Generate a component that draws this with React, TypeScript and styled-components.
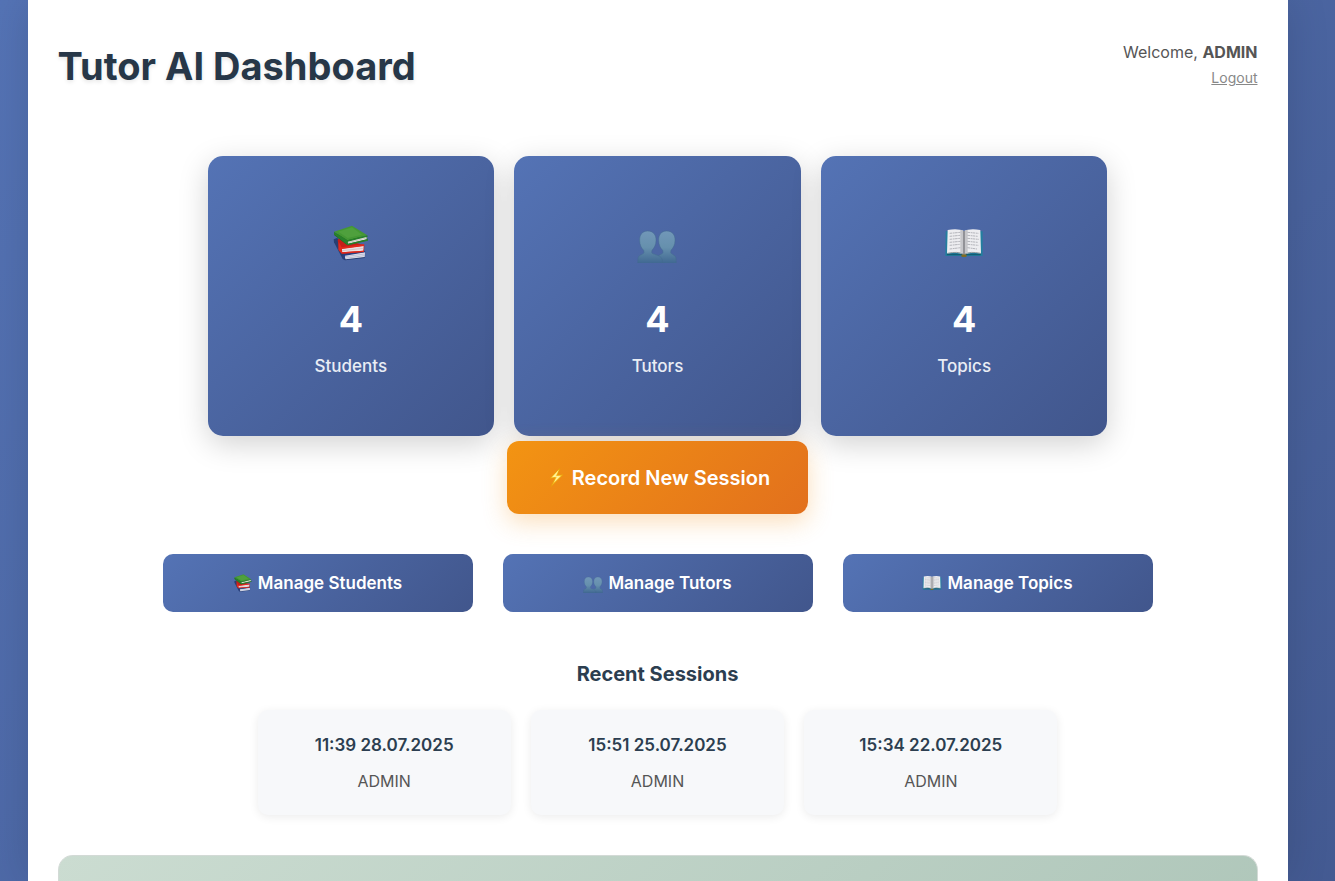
import React from "react";
import styled, { createGlobalStyle } from "styled-components";

const GlobalStyle = createGlobalStyle`
  * { box-sizing: border-box; }
  body {
    margin: 0;
    font-family: Inter, "Liberation Sans", sans-serif;
    color: #2c3e50;
    background: #4a649f;
  }
  h1, h2, p { margin: 0; }
`;

const BLUE = "linear-gradient(135deg, #5473b5 0%, #41568c 100%)";

const Page = styled.div`
  display: flex;
  justify-content: center;
  min-height: 100vh;
  padding-right: 20px;
  background: linear-gradient(135deg, #5473b5 0%, #41568c 100%) 0 0 / 100% 1240px;
`;

const Container = styled.main`
  display: flex;
  flex-direction: column;
  align-items: center;
  width: 100%;
  max-width: 1260px;
  padding: 40px 30px 0;
  background: #fff;
  box-shadow: 0 0 40px rgba(0, 0, 0, 0.13);
`;

const Header = styled.header`
  display: flex;
  justify-content: space-between;
  align-items: flex-start;
  width: 100%;
  margin-bottom: 64px;
`;

const Title = styled.h1`
  font-size: 38px;
  line-height: 52px;
  font-weight: 700;
  color: #273748;
  text-shadow: 0 2px 4px rgba(0, 0, 0, 0.1);
`;

const UserBox = styled.div`
  display: flex;
  flex-direction: column;
  align-items: flex-end;
  gap: 4px;
  font-size: 16px;
  line-height: 24px;
  color: #555;
`;

const LogoutLink = styled.a`
  font-size: 14px;
  line-height: 20px;
  color: #888;
  text-decoration: underline;
`;

const Stats = styled.section`
  display: grid;
  grid-template-columns: repeat(3, 1fr);
  gap: 20px;
  width: 100%;
  max-width: 900px;
`;

const StatCard = styled.article`
  display: flex;
  flex-direction: column;
  align-items: center;
  padding: 67px 20px 59px;
  border-radius: 15px;
  background: ${BLUE};
  color: #fff;
  box-shadow: 0 8px 30px rgba(0, 0, 0, 0.18);
`;

const StatValue = styled.p`
  margin: 36px 0 16px;
  font-size: 36px;
  line-height: 40px;
  font-weight: 700;
`;

const StatLabel = styled.p`
  font-size: 17px;
  line-height: 22px;
  font-weight: 500;
  color: #e9edf5;
`;

const RecordButton = styled.button`
  display: flex;
  align-items: center;
  justify-content: center;
  gap: 5px;
  height: 73px;
  margin: 5px 0 40px;
  padding: 0 38px;
  border: 0;
  border-radius: 12px;
  background: linear-gradient(135deg, #f39412 0%, #e2701d 100%);
  box-shadow: 0 8px 25px rgba(243, 148, 32, 0.3);
  color: #fff;
  font: 600 20px/28px Inter, "Liberation Sans", sans-serif;
  cursor: pointer;
`;

const Actions = styled.nav`
  display: grid;
  grid-template-columns: repeat(3, 1fr);
  gap: 30px;
  width: 100%;
  max-width: 990px;
  margin-bottom: 48px;
`;

const ActionLink = styled.a`
  display: flex;
  align-items: center;
  justify-content: center;
  gap: 5px;
  height: 58px;
  border-radius: 10px;
  background: ${BLUE};
  color: #fff;
  font-size: 17px;
  line-height: 24px;
  font-weight: 600;
  text-decoration: none;
`;

const SectionTitle = styled.h2`
  margin-bottom: 22px;
  font-size: 20px;
  line-height: 28px;
  font-weight: 700;
  color: #2c3e50;
`;

const Sessions = styled.section`
  display: grid;
  grid-template-columns: repeat(3, 1fr);
  gap: 20px;
  width: 100%;
  max-width: 800px;
  margin-bottom: 40px;
`;

const SessionCard = styled.article`
  display: flex;
  flex-direction: column;
  align-items: center;
  gap: 12px;
  padding: 23px 20px 22px;
  border-radius: 10px;
  background: #f7f8fa;
  box-shadow: 0 2px 10px rgba(0, 0, 0, 0.08);
  line-height: 24px;
`;

const SessionDate = styled.p`
  font-size: 17px;
  font-weight: 600;
`;

const SessionTutor = styled.p`
  font-size: 16px;
  color: #555;
`;

const Panel = styled.section`
  flex: 1;
  width: 100%;
  min-height: 26px;
  border: 1px solid #d3dad6;
  border-bottom: 0;
  border-radius: 15px 15px 0 0;
  background: linear-gradient(135deg, #cbdcd1 0%, #a8c1b4 100%) 0 0 / 100% 400px no-repeat;
`;

type IconProps = { size: number };

const Books = ({ size }: IconProps) => (
  <svg width={size} height={size} viewBox="33 24 120 120" aria-hidden="true">
    <path d="M41 73 51 69 135 119 134 129 75 136 68 132 42 82Z" fill="#283f73" />
    <path d="M72 120 135 111 134 126 77 133Z" fill="#e4e5ef" />
    <path d="M73 125 134 117M75 130 133 122" stroke="#a5abc7" strokeWidth="2" />
    <path d="M69 118 135 107 136 112 75 122 74 134 68 128Z" fill="#273f83" />
    <path d="M53 75 58 69 133 91 132 110 68 116 58 108Z" fill="#c51f18" />
    <path d="M64 101 131 92 130 107 67 112Z" fill="#ece0e2" />
    <path d="M66 107 130 100" stroke="#c9b5b9" strokeWidth="2" />
    <path d="M56 80 65 97 133 87 132 93 66 102 66 112 132 107 132 111 65 116 55 104Z" fill="#e22a1d" />
    <path d="M42 54 84 65 140 65 144 76 84 91 78 88 43 61Z" fill="#226b20" />
    <path d="M83 79 139 64 140 73 84 86Z" fill="#e6e7e3" />
    <path d="M83 83 139 69" stroke="#b5b9ac" strokeWidth="2" />
    <path d="M42 50 96 32 142 61 82 76Z" fill="#449834" />
    <path d="M55 50 96 37 126 59 83 69Z" fill="#4fa03d" />
    <path d="M42 50 82 76 142 61 143 65 83 80 82 87 142 73 144 77 83 91 75 84 42 58Z" fill="#28802a" />
  </svg>
);

const People = ({ size }: IconProps) => (
  <svg width={size} height={size} viewBox="30 9 120 120" aria-hidden="true">
    <defs>
      <linearGradient id={`silhouette-${size}`} x1="0" y1="0" x2="0" y2="1">
        <stop offset="0" stopColor="#7197b8" />
        <stop offset="0.5" stopColor="#6690ad" />
        <stop offset="1" stopColor="#3f6791" />
      </linearGradient>
    </defs>
    <g fill={`url(#silhouette-${size})`} stroke="#426a8e" strokeWidth="1.5">
      <path d="M119 33C136 33 145 45 144 62 144 74 139 83 132 91L131 97C131 104 146 103 147 115L148 131H90V115C91 103 108 104 108 97L107 91C100 84 95 74 95 62 94 45 103 33 119 33Z" />
      <path d="M62 33C79 33 88 45 87 62 87 74 82 83 75 91L74 97C74 105 101 102 106 119L107 131H32L33 115C34 103 51 104 51 97L50 91C43 84 38 74 38 62 37 45 46 33 62 33Z" />
    </g>
  </svg>
);

const OpenBook = ({ size }: IconProps) => (
  <svg width={size} height={size} viewBox="30 24 120 120" aria-hidden="true">
    <path d="M35 49H146V123H99L96 127H84L81 123H34Z" fill="#237f9f" />
    <path d="M39 116H141L140 121H98L90 124 82 121H38Z" fill="#135d73" />
    <path d="M41 45Q71 39 90 48Q109 39 139 45L141 115Q108 110 90 119Q72 110 39 115Z" fill="#ededf0" />
    <path d="M79 44Q87 45 90 49Q93 45 101 44V111Q94 113 90 119Q86 113 79 111Z" fill="#c6c6ca" />
    <path d="M90 48V118" stroke="#77777d" strokeWidth="4" />
    <path d="M40 115Q72 108 90 118Q108 108 140 115" fill="none" stroke="#8f999e" strokeWidth="3" />
    <path d="M47 55 80 52M47 64 79 61M47 73 78 70M47 82 80 79M47 91 77 88M47 102 80 98M100 52 133 55M100 61 132 64M100 70 134 73M100 79 131 82M100 88 133 91M100 98 129 102" stroke="#b4b5bb" strokeWidth="3" strokeDasharray="8 2 5 1" />
    <path d="M81 120Q90 116 99 120L96 126H84Z" fill="#806a24" />
  </svg>
);

const Bolt = () => (
  <svg width="22" height="22" viewBox="0 0 22 22" aria-hidden="true">
    <path d="M15 1 5 11.2 10.2 10.8 6 19.5 18 7.8 12.4 8.2Z" fill="#fbc62b" stroke="#e99a0b" strokeWidth="0.8" />
    <path d="M13.7 3 7 10.3 11.8 9.8 9 15.5 15.8 8.7 10.8 9Z" fill="#fff29a" />
  </svg>
);

const categories = [
  { name: "Students", count: 4, Icon: Books },
  { name: "Tutors", count: 4, Icon: People },
  { name: "Topics", count: 4, Icon: OpenBook },
];

const sessions = ["11:39 28.07.2025", "15:51 25.07.2025", "15:34 22.07.2025"];

export default function App() {
  return (
    <>
      <GlobalStyle />
      <Page>
        <Container>
          <Header>
            <Title>Tutor AI Dashboard</Title>
            <UserBox>
              <span>Welcome, <strong>ADMIN</strong></span>
              <LogoutLink href="#logout">Logout</LogoutLink>
            </UserBox>
          </Header>
          <Stats>
            {categories.map(({ name, count, Icon }) => (
              <StatCard key={name}>
                <Icon size={40} />
                <StatValue>{count}</StatValue>
                <StatLabel>{name}</StatLabel>
              </StatCard>
            ))}
          </Stats>
          <RecordButton type="button"><Bolt />Record New Session</RecordButton>
          <Actions>
            {categories.map(({ name, Icon }) => (
              <ActionLink key={name} href={`#${name.toLowerCase()}`}>
                <Icon size={20} />Manage {name}
              </ActionLink>
            ))}
          </Actions>
          <SectionTitle>Recent Sessions</SectionTitle>
          <Sessions>
            {sessions.map((date) => (
              <SessionCard key={date}>
                <SessionDate>{date}</SessionDate>
                <SessionTutor>ADMIN</SessionTutor>
              </SessionCard>
            ))}
          </Sessions>
          <Panel />
        </Container>
      </Page>
    </>
  );
}
